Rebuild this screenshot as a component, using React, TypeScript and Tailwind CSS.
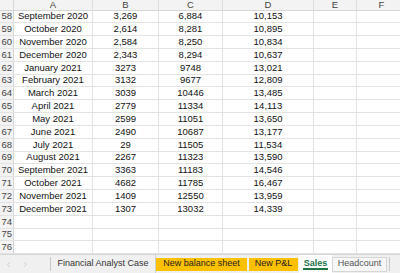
import { ChevronLeft, ChevronRight } from "lucide-react";

const ROWS: Array<[number, string, string, string, string]> = [
  [58, "September 2020", "3,269", "6,884", "10,153"],
  [59, "October 2020", "2,614", "8,281", "10,895"],
  [60, "November 2020", "2,584", "8,250", "10,834"],
  [61, "December 2020", "2,343", "8,294", "10,637"],
  [62, "January 2021", "3273", "9748", "13,021"],
  [63, "February 2021", "3132", "9677", "12,809"],
  [64, "March 2021", "3039", "10446", "13,485"],
  [65, "April 2021", "2779", "11334", "14,113"],
  [66, "May 2021", "2599", "11051", "13,650"],
  [67, "June 2021", "2490", "10687", "13,177"],
  [68, "July 2021", "29", "11505", "11,534"],
  [69, "August 2021", "2267", "11323", "13,590"],
  [70, "September 2021", "3363", "11183", "14,546"],
  [71, "October 2021", "4682", "11785", "16,467"],
  [72, "November 2021", "1409", "12550", "13,959"],
  [73, "December 2021", "1307", "13032", "14,339"],
  [74, "", "", "", ""],
  [75, "", "", "", ""],
  [76, "", "", "", ""],
];

const COLS = [
  { id: "A", w: "w-[79px]" },
  { id: "B", w: "w-[66px]" },
  { id: "C", w: "w-[64px]" },
  { id: "D", w: "w-[91px]" },
  { id: "E", w: "w-[43px]" },
  { id: "F", w: "w-[50px]" },
];

const App = () => {
  return (
    <div className="w-[400px] h-[273px] overflow-hidden bg-white flex flex-col font-['Liberation_Sans',Arial,sans-serif] text-[9.5px] text-[#111]">
      {/* grid */}
      <div className="flex-1 overflow-hidden">
        {/* column headers */}
        <div className="flex h-[10.5px] bg-[#f3f3f3] border-b border-[#d6d6d6]">
          <div className="w-[14px] shrink-0 border-r border-[#d6d6d6]" />
          {COLS.map((c) => (
            <div
              key={c.id}
              className={`${c.w} shrink-0 border-r border-[#dedede] text-center leading-[9.5px] text-[#444]`}
            >
              {c.id}
            </div>
          ))}
        </div>

        {/* rows */}
        {ROWS.map(([n, a, b, c, d]) => (
          <div key={n} className="flex h-[12.83px] border-b border-[#e3e3e3]">
            <div className="w-[14px] shrink-0 overflow-hidden bg-[#f3f3f3] border-r border-[#d6d6d6] flex justify-end items-center pr-[1px] text-[#444] whitespace-nowrap">
              {n}
            </div>
            <div className="w-[79px] shrink-0 border-r border-[#e3e3e3] flex items-center justify-center whitespace-nowrap">
              {a}
            </div>
            <div className="w-[66px] shrink-0 border-r border-[#e3e3e3] flex items-center justify-center">
              {b}
            </div>
            <div className="w-[64px] shrink-0 border-r border-[#e3e3e3] flex items-center justify-center">
              {c}
            </div>
            <div className="w-[91px] shrink-0 border-r border-[#e3e3e3] flex items-center justify-center">
              {d}
            </div>
            <div className="w-[43px] shrink-0 border-r border-[#e3e3e3]" />
            <div className="w-[50px] shrink-0" />
          </div>
        ))}
      </div>

      {/* sheet tabs */}
      <div className="h-[19px] shrink-0 bg-[#f0f0f0] border-t border-[#d6d6d6] flex items-center text-[9px] text-[#333]">
        <div className="w-[50px] flex items-center pl-[5px] gap-[10px] text-[#c4c4c4]">
          <ChevronLeft size={7} strokeWidth={3} />
          <ChevronRight size={7} strokeWidth={3} />
        </div>
        <div className="h-[14px] w-px bg-[#c8c8c8]" />
        <div className="w-[105px] h-full flex items-center justify-center border-r border-[#d0d0d0]">
          Financial Analyst Case
        </div>
        <div className="w-[91px] h-[13px] flex items-center justify-center bg-[#ffc000] text-[#222]">
          New balance sheet
        </div>
        <div className="w-[2px]" />
        <div className="w-[49px] h-[13px] flex items-center justify-center bg-[#ffc000] text-[#222]">
          New P&amp;L
        </div>
        <div className="w-[1px]" />
        <div className="w-[33px] h-full bg-white flex flex-col items-center justify-center">
          <span className="font-bold text-[#217346] leading-[10px] border-b-2 border-[#217346] px-[1px]">
            Sales
          </span>
        </div>
        <div className="w-[55px] h-[15px] flex items-center justify-center bg-[#f7f7f7] border border-[#d6d6d6] text-[#555]">
          Headcount
        </div>
        <div className="ml-[2px] h-[14px] w-px bg-[#c8c8c8]" />
      </div>
    </div>
  );
};

export default App;
